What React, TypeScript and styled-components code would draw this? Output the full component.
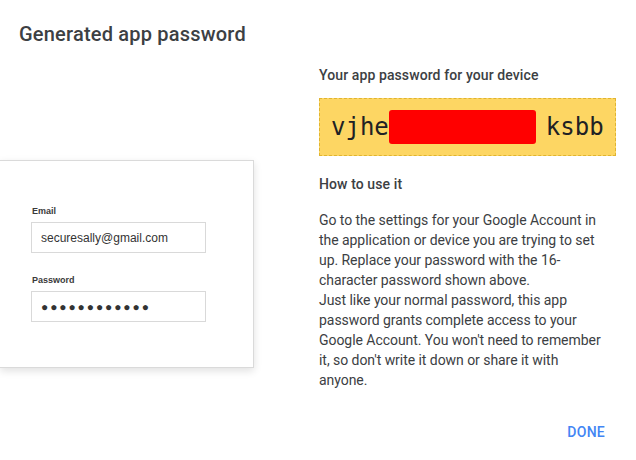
import React from "react";
import styled, { createGlobalStyle } from "styled-components";

const GlobalStyle = createGlobalStyle`
    html, body {
        margin: 0;
        padding: 0;
        background: #fff;
    }
    body {
        font-family: Roboto, "Liberation Sans", sans-serif;
    }
`;

const Dialog = styled.div`
    width: 636px;
    height: 460px;
    box-sizing: border-box;
    display: flex;
    flex-direction: column;
    background: #fff;
    overflow: hidden;
`;

const Title = styled.h1`
    margin: 0;
    padding: 22px 0 0 19px;
    height: 46px;
    box-sizing: border-box;
    font-size: 20px;
    font-weight: 500;
    line-height: 24px;
    color: #3c4043;
    letter-spacing: 0.2px;
`;

const Body = styled.div`
    display: grid;
    grid-template-columns: 319px 297px;
    flex: 1;
`;

const Illustration = styled.div`
    padding-top: 114px;
`;

const LoginCard = styled.div`
    width: 254px;
    height: 208px;
    box-sizing: border-box;
    border: 1px solid #dadada;
    border-left: none;
    background: #fff;
    box-shadow: 0 3px 8px rgba(0, 0, 0, 0.12);
    padding: 45px 0 0 31px;
    font-family: "Liberation Sans", Arial, sans-serif;
`;

const FieldLabel = styled.div`
    font-size: 9px;
    font-weight: 700;
    color: #3a3a3a;
    line-height: 11px;
    margin-bottom: 5px;
    margin-left: 1px;
`;

const FieldBox = styled.div<{ $dots?: boolean }>`
    width: 175px;
    height: 31px;
    box-sizing: border-box;
    border: 1px solid #d9d9d9;
    padding-left: 9px;
    display: flex;
    align-items: center;
    font-size: 12px;
    letter-spacing: ${(p) => (p.$dots ? "1.9px" : "0")};
    color: #333;
    margin-bottom: 22px;
`;

const Info = styled.div`
    padding-top: 19px;
    color: #3c4043;
`;

const Heading = styled.div`
    font-size: 14px;
    font-weight: 500;
    line-height: 20px;
    letter-spacing: 0.1px;
`;

const PasswordBox = styled.div`
    margin-top: 13px;
    height: 58px;
    box-sizing: border-box;
    background: #fdd663;
    border: 1px dashed #e0b430;
    display: flex;
    align-items: center;
    padding-left: 11px;
    font-family: "DejaVu Sans Mono", "Liberation Mono", monospace;
    font-size: 24px;
    color: #202124;
`;

const Redacted = styled.span`
    display: inline-block;
    width: 147px;
    height: 34px;
    background: #ff0000;
    border-radius: 3px;
    margin-right: 10px;
`;

const Subheading = styled(Heading)`
    margin-top: 18px;
`;

const Paragraph = styled.div`
    margin-top: 16px;
    font-size: 14px;
    line-height: 20px;
    letter-spacing: -0.05px;
    color: #3c4043;
`;

const Line = styled.div`
    white-space: nowrap;
`;

const Footer = styled.div`
    display: flex;
    justify-content: flex-end;
    padding: 0 31px 20px 0;
`;

const DoneButton = styled.button`
    background: none;
    border: none;
    padding: 0;
    font-family: Roboto, "Liberation Sans", sans-serif;
    font-size: 14px;
    font-weight: 500;
    letter-spacing: 0.25px;
    color: #4285f4;
    cursor: pointer;
`;

const instructions = [
    "Go to the settings for your Google Account in",
    "the application or device you are trying to set",
    "up. Replace your password with the 16-",
    "character password shown above.",
    "Just like your normal password, this app",
    "password grants complete access to your",
    "Google Account. You won't need to remember",
    "it, so don't write it down or share it with",
    "anyone.",
];

export default function App() {
    return (
        <>
            <GlobalStyle />
            <Dialog>
                <Title>Generated app password</Title>
                <Body>
                    <Illustration>
                        <LoginCard>
                            <FieldLabel>Email</FieldLabel>
                            <FieldBox>securesally@gmail.com</FieldBox>
                            <FieldLabel>Password</FieldLabel>
                            <FieldBox $dots>●●●●●●●●●●●●</FieldBox>
                        </LoginCard>
                    </Illustration>
                    <Info>
                        <Heading>Your app password for your device</Heading>
                        <PasswordBox>
                            vjhe
                            <Redacted />
                            ksbb
                        </PasswordBox>
                        <Subheading>How to use it</Subheading>
                        <Paragraph>
                            {instructions.map((line) => (
                                <Line key={line}>{line}</Line>
                            ))}
                        </Paragraph>
                    </Info>
                </Body>
                <Footer>
                    <DoneButton>DONE</DoneButton>
                </Footer>
            </Dialog>
        </>
    );
}
